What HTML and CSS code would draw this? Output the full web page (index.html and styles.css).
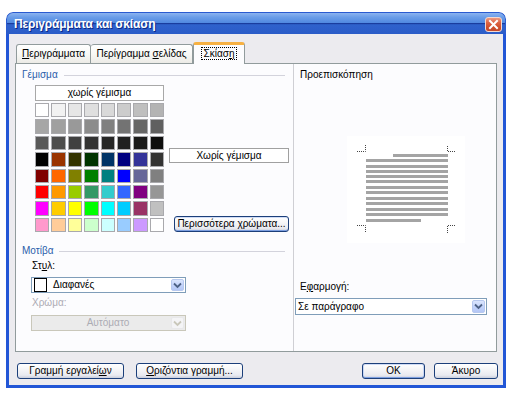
FILE: index.html
```html
<!DOCTYPE html>
<html lang="el">
<head>
<meta charset="utf-8">
<title>Περιγράμματα και σκίαση</title>
<link rel="stylesheet" href="styles.css">
</head>
<body>
<div class="window">
  <div class="titlebar">
    <span class="title">Περιγράμματα και σκίαση</span>
    <span class="close"><svg width="15" height="13" viewBox="0 0 15 13"><path d="M4 3 L11 10 M11 3 L4 10" stroke="#fff" stroke-width="2" fill="none" stroke-linecap="square"/></svg></span>
  </div>
  <div class="client">
    <div class="tabs">
      <div class="tab t1"><span><u>Π</u>εριγράμματα</span></div>
      <div class="tab t2"><span>Περίγραμμα <u>σ</u>ελίδας</span></div>
      <div class="tab active"><span class="focus">Σκίασ<u>η</u></span></div>
    </div>
    <div class="panel">
      <div class="col-left">
        <div class="group-h"><span>Γέμισμα</span></div>
        <div class="fill-row">
          <div class="palette">
            <div class="nofill-btn">χωρίς γέμισμα</div>
            <div class="swatches">
              <i style="background:#ffffff"></i><i style="background:#f2f2f2"></i><i style="background:#e6e6e6"></i><i style="background:#dfdfdf"></i><i style="background:#d9d9d9"></i><i style="background:#cccccc"></i><i style="background:#bfbfbf"></i><i style="background:#b3b3b3"></i>
              <i style="background:#a6a6a6"></i><i style="background:#a0a0a0"></i><i style="background:#999999"></i><i style="background:#8c8c8c"></i><i style="background:#808080"></i><i style="background:#737373"></i><i style="background:#666666"></i><i style="background:#606060"></i>
              <i style="background:#595959"></i><i style="background:#4d4d4d"></i><i style="background:#404040"></i><i style="background:#333333"></i><i style="background:#262626"></i><i style="background:#202020"></i><i style="background:#1a1a1a"></i><i style="background:#0d0d0d"></i>
              <i style="background:#000000"></i><i style="background:#993300"></i><i style="background:#333300"></i><i style="background:#003300"></i><i style="background:#003366"></i><i style="background:#000080"></i><i style="background:#333399"></i><i style="background:#333333"></i>
              <i style="background:#800000"></i><i style="background:#ff6600"></i><i style="background:#808000"></i><i style="background:#008000"></i><i style="background:#008080"></i><i style="background:#0000ff"></i><i style="background:#666699"></i><i style="background:#808080"></i>
              <i style="background:#ff0000"></i><i style="background:#ff9900"></i><i style="background:#99cc00"></i><i style="background:#339966"></i><i style="background:#33cccc"></i><i style="background:#3366ff"></i><i style="background:#800080"></i><i style="background:#969696"></i>
              <i style="background:#ff00ff"></i><i style="background:#ffcc00"></i><i style="background:#ffff00"></i><i style="background:#00ff00"></i><i style="background:#00ffff"></i><i style="background:#00ccff"></i><i style="background:#993366"></i><i style="background:#c0c0c0"></i>
              <i style="background:#ff99cc"></i><i style="background:#ffcc99"></i><i style="background:#ffff99"></i><i style="background:#ccffcc"></i><i style="background:#ccffff"></i><i style="background:#99ccff"></i><i style="background:#cc99ff"></i><i style="background:#ffffff"></i>
            </div>
          </div>
          <div class="fill-side">
            <div class="fill-name">Χωρίς γέμισμα</div>
            <div class="btn more">Περισσότερα χρώματα...</div>
          </div>
        </div>
        <div class="group-h motiva"><span>Μοτίβα</span></div>
        <div class="label ind">Στ<u>υ</u>λ:</div>
        <div class="combo style-combo">
          <span class="sq"></span>
          <span class="ctext">Διαφανές</span>
          <span class="arrow"><svg width="9" height="7" viewBox="0 0 9 7"><path d="M1 1.5 L4.5 5 L8 1.5" stroke="#4d6185" stroke-width="1.8" fill="none"/></svg></span>
        </div>
        <div class="label ind disabled">Χρώμα:</div>
        <div class="combo color-combo disabled">
          <span class="ctext center">Αυτόματο</span>
          <span class="arrow"><svg width="9" height="7" viewBox="0 0 9 7"><path d="M1 1.5 L4.5 5 L8 1.5" stroke="#c9c7ba" stroke-width="1.8" fill="none"/></svg></span>
        </div>
      </div>
      <div class="col-right">
        <div class="label">Προεπισκόπηση</div>
        <svg class="preview" width="118" height="107" viewBox="0 0 118 107">
          <rect x="0" y="0" width="118" height="107" fill="#ffffff"/>
          <g stroke="#444" stroke-width="1" stroke-dasharray="1 1" fill="none">
            <path d="M10 15.5 H18.5 V9"/>
            <path d="M108 15.5 H100.5 V9"/>
            <path d="M10 89.5 H18.5 V97"/>
            <path d="M108 89.5 H100.5 V97"/>
          </g>
          <g fill="#a4a4a4">
            <rect x="46" y="18" width="55" height="3"/>
            <rect x="19" y="23" width="82" height="3"/>
            <rect x="19" y="29" width="82" height="3"/>
            <rect x="19" y="34" width="82" height="3"/>
            <rect x="19" y="39" width="82" height="3"/>
            <rect x="19" y="44" width="82" height="3"/>
            <rect x="19" y="50" width="82" height="3"/>
            <rect x="19" y="55" width="82" height="3"/>
            <rect x="19" y="61" width="82" height="3"/>
            <rect x="19" y="66" width="82" height="3"/>
            <rect x="19" y="72" width="82" height="3"/>
            <rect x="19" y="77" width="82" height="3"/>
            <rect x="19" y="83" width="55" height="3"/>
          </g>
        </svg>
        <div class="label apply-l">Ε<u>φ</u>αρμογή:</div>
        <div class="combo apply-combo">
          <span class="ctext">Σε παράγραφο</span>
          <span class="arrow"><svg width="9" height="7" viewBox="0 0 9 7"><path d="M1 1.5 L4.5 5 L8 1.5" stroke="#4d6185" stroke-width="1.8" fill="none"/></svg></span>
        </div>
      </div>
    </div>
    <div class="buttons">
      <div class="btn wide">Γραμμή εργαλεί<u>ω</u>ν</div>
      <div class="btn wide second"><u>Ο</u>ριζόντια γραμμή...</div>
      <div class="spacer"></div>
      <div class="btn ok">OK</div>
      <div class="btn cancel">Άκυρο</div>
    </div>
  </div>
</div>
</body>
</html>
```

FILE: styles.css
```css
* { box-sizing: border-box; margin: 0; padding: 0; }
html, body { width: 525px; height: 403px; background: #ffffff; overflow: hidden; }
body {
  padding: 12px 0 0 6px;
  font-family: "Liberation Sans", Arial, sans-serif;
  font-size: 10px;
  color: #000;
}
u { text-decoration: underline; text-underline-offset: 1px; }

.window {
  width: 500px;
  height: 376px;
  display: flex;
  flex-direction: column;
  border-radius: 7px 7px 0 0;
  overflow: hidden;
  background: #ecebef;
}

.titlebar {
  height: 22px;
  flex: none;
  display: flex;
  align-items: center;
  padding: 0 3px 0 7px;
  background: linear-gradient(to bottom, #8cb4f0 0%, #6a9de8 20%, #5088e0 48%, #1a3d9e 50%, #2f62cc 56%, #2b5cc8 100%);
  border: 1px solid #2a5bd0;
  border-bottom: none;
  border-radius: 7px 7px 0 0;
}
.title {
  flex: 1;
  color: #ffffff;
  font-weight: bold;
  font-size: 12px;
  letter-spacing: -0.2px;
  text-shadow: 1px 1px 0 #0b2a86;
  padding-top: 1px;
}
.close {
  width: 17px;
  height: 15px;
  margin-top: 1px;
  border: 1px solid #f4d8cf;
  border-radius: 3px;
  background: linear-gradient(to bottom, #ee9a80 0%, #de6444 35%, #cf4f2c 70%, #c4492a 100%);
  display: flex;
  align-items: center;
  justify-content: center;
}
.close svg { display: block; }

.client {
  flex: 1;
  display: flex;
  flex-direction: column;
  border: 3px solid #2256d6;
  border-top: none;
  padding-top: 8px;
}

.tabs {
  height: 21px;
  display: flex;
  align-items: flex-end;
  margin-left: 7px;
  position: relative;
  z-index: 2;
}
.tab {
  height: 19px;
  border: 1px solid #919b9c;
  border-bottom: none;
  border-radius: 3px 3px 0 0;
  background: linear-gradient(to bottom, #ffffff 0%, #f8f8f6 50%, #ecebe6 100%);
  display: flex;
  align-items: center;
  justify-content: center;
  line-height: 12px;
}
.t1 { width: 75px; }
.t2 { width: 102px; border-left: none; }
.tab.active {
  width: 52px;
  height: 22px;
  margin-bottom: -1px;
  background: #fcfcfe;
  border-top: 3px solid #f7b143;
  border-left: 1px solid #919b9c;
  padding-bottom: 2px;
}
.focus {
  border: 1px dotted #000;
  padding: 0 2px;
  line-height: 11px;
}

.panel {
  margin-left: 6px;
  width: 482px;
  height: 289px;
  flex: none;
  border: 1px solid #919b9c;
  background: #fcfcfe;
  display: flex;
}

.col-left {
  width: 278px;
  border-right: 1px solid #cfcfd4;
  display: flex;
  flex-direction: column;
}
.group-h {
  display: flex;
  align-items: center;
  height: 12px;
  line-height: 12px;
  margin-top: 5px;
  padding: 0 8px 0 6px;
  color: #2a5caa;
}
.group-h::after {
  content: "";
  flex: 1;
  height: 1px;
  background: #d3d3dc;
  margin-left: 6px;
}
.group-h.motiva { margin-top: 13px; }

.fill-row {
  display: flex;
  margin-top: 4px;
  padding-left: 19px;
}
.palette { width: 129px; }
.nofill-btn {
  height: 16px;
  border: 1px solid #a8a8a8;
  background: #ffffff;
  text-align: center;
  line-height: 14px;
}
.swatches {
  margin-top: 2px;
  height: 129px;
  display: grid;
  grid-template-columns: repeat(8, 1fr);
  grid-template-rows: repeat(8, 1fr);
  gap: 2px;
}
.swatches i {
  display: block;
  border: 1px solid #a9a9ad;
}
.fill-side {
  margin-left: 5px;
  width: 120px;
  display: flex;
  flex-direction: column;
}
.fill-name {
  margin-top: 63px;
  height: 15px;
  border: 1px solid #a0a0a0;
  background: #ffffff;
  text-align: center;
  line-height: 13px;
}

.btn {
  height: 16px;
  border: 1px solid #1c3f7a;
  border-radius: 3px;
  background: linear-gradient(to bottom, #ffffff 0%, #f5f5f7 40%, #e9eaf0 80%, #c9cedc 100%);
  text-align: center;
  line-height: 14px;
}
.more {
  margin-top: 53px;
  margin-left: 5px;
  width: 115px;
  box-shadow: inset 0 -1px 0 #7d9fe0, inset 0 1px 0 #d0dcf6;
}

.label {
  height: 12px;
  line-height: 12px;
}
.label.ind { margin-left: 16px; margin-top: 3px; }
.label.disabled { color: #acabb4; margin-top: 4px; }

.combo {
  height: 16px;
  border: 1px solid #7f9db9;
  background: #ffffff;
  display: flex;
  align-items: center;
  padding: 1px;
}
.ctext { flex: 1; line-height: 12px; padding-left: 2px; }
.ctext.center { text-align: center; padding-left: 12px; }
.arrow {
  width: 13px;
  height: 100%;
  border: 1px solid #b7c8ef;
  border-radius: 2px;
  background: linear-gradient(to bottom, #dbe5fd 0%, #c4d4fb 50%, #b3c6f5 100%);
  display: flex;
  align-items: center;
  justify-content: center;
}
.arrow svg { display: block; }
.style-combo {
  margin-left: 15px;
  margin-top: 5px;
  width: 155px;
}
.sq {
  width: 13px;
  height: 14px;
  border: 1px solid #000;
  background: #fff;
  margin-left: 1px;
}
.style-combo .ctext { padding-left: 6px; }
.color-combo {
  margin-left: 15px;
  margin-top: 6px;
  width: 155px;
  border-color: #c9c7ba;
  background: #ebebeb;
}
.color-combo .ctext { color: #acabb4; }
.color-combo .arrow {
  border-color: #e8e8ea;
  background: #f4f4f6;
}

.col-right {
  flex: 1;
  display: flex;
  flex-direction: column;
  padding-left: 6px;
}
.col-right > .label:first-child { margin-top: 5px; }
.preview {
  display: block;
  margin-top: 55px;
  margin-left: 47px;
}
.apply-l { margin-top: 38px; }
.apply-combo {
  margin-top: 5px;
  margin-left: -5px;
  width: 192px;
  height: 17px;
}
.apply-combo .ctext { padding-left: 1px; }

.buttons {
  margin-top: 11px;
  height: 16px;
  display: flex;
  padding: 0 5px 0 8px;
}
.wide { width: 107px; }
.second { margin-left: 12px; }
.spacer { flex: 1; }
.ok {
  width: 63px;
  box-shadow: inset 0 -1px 0 #7d9fe0, inset 0 1px 0 #d0dcf6, inset 1px 0 0 #c8d6f4, inset -1px 0 0 #c8d6f4;
}
.cancel { width: 64px; margin-left: 9px; }
```
